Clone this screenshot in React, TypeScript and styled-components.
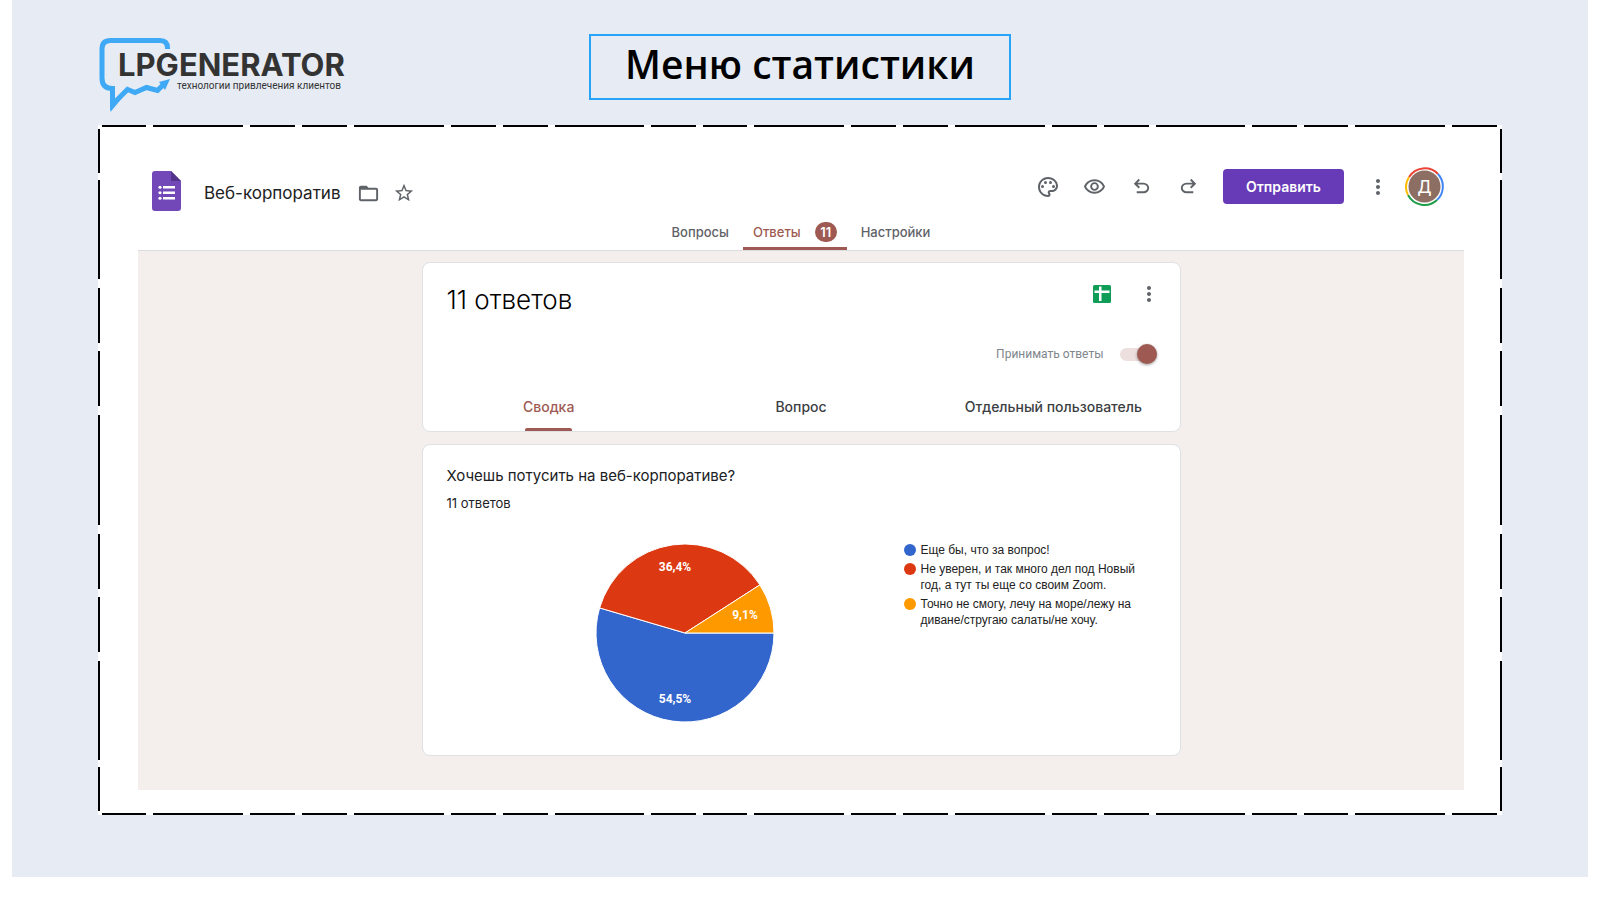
import React from "react";
import styled, { createGlobalStyle, css } from "styled-components";
import {
  MdFolderOpen,
  MdMoreVert,
  MdOutlinePalette,
  MdOutlineRemoveRedEye,
  MdStarBorder,
} from "react-icons/md";

const accent = "#9e5a52";
const ink = "#202124";
const muted = "#5f6368";

const GlobalStyle = createGlobalStyle`
  * { box-sizing: border-box; }
  body {
    margin: 0;
    background: #fff;
    color: ${ink};
    font-family: Inter, Roboto, sans-serif;
  }
  h1, h2, h3, p, ul { margin: 0; padding: 0; font-weight: 400; }
  button { border: 0; padding: 0; background: none; font: inherit; cursor: pointer; }
`;

const Slide = styled.div`
  margin: 0 12px 36px;
  padding: 0 86px 62px;
  background: #e6ebf4;
`;

const SlideHeader = styled.header`
  display: grid;
  grid-template-columns: 1fr auto 1fr;
  align-items: start;
  height: 125px;
  padding-top: 34px;
`;

const Logo = styled.div`
  position: relative;
  width: 256px;
  padding: 16px 0 0 20px;
`;

const LogoMark = styled.svg`
  position: absolute;
  left: 0;
  top: 2px;
`;

const LogoName = styled.p`
  position: relative;
  color: #333;
  font: 700 31px/30px Inter, sans-serif;
`;

const LogoTagline = styled.p`
  position: relative;
  padding-left: 59px;
  color: #333;
  font: 400 10px/12px Roboto, sans-serif;
  white-space: nowrap;
`;

const SlideTitle = styled.h1`
  display: flex;
  align-items: center;
  height: 66px;
  padding: 0 34px 6px;
  border: 2px solid #27a3fa;
  color: #000;
  font: 600 39px/48px "Open Sans", sans-serif;
`;

const Frame = styled.main`
  position: relative;
  padding: 0 38px 25px 40px;
  background: #fff;
`;

const FrameLines = styled.svg`
  position: absolute;
  inset: 0;
  width: 100%;
  height: 100%;
  pointer-events: none;
`;

const FormHeader = styled.header`
  border-bottom: 1px solid #dadce0;
`;

const TopRow = styled.div`
  display: flex;
  justify-content: space-between;
  align-items: flex-start;
  height: 89px;
  padding: 42px 20px 0 14px;
`;

const FormName = styled.div`
  display: flex;
  align-items: center;
  height: 44px;
  margin-top: 4px;
`;

const FormIcon = styled.svg`
  align-self: flex-start;
`;

const FormTitle = styled.h2`
  margin: 0 15px 0 23px;
  font-size: 17px;
  line-height: 24px;
`;

const Toolbar = styled.div`
  display: flex;
  align-items: center;
`;

const IconButton = styled.button<{ $width: number }>`
  display: flex;
  justify-content: center;
  align-items: center;
  width: ${(p) => p.$width}px;
  height: 36px;
  color: ${muted};
`;

const SendButton = styled.button`
  width: 121px;
  height: 35px;
  margin: 0 10px 0 11px;
  border-radius: 4px;
  background: #673ab7;
  color: #fff;
  font-size: 14px;
  font-weight: 600;
`;

const AvatarButton = styled.button`
  position: relative;
  display: grid;
  place-items: center;
  width: 39px;
  height: 39px;
  margin-left: 4px;
  color: #fff;
  font: 400 18px/20px Roboto, sans-serif;
`;

const AvatarRing = styled.svg`
  position: absolute;
  inset: 0;
`;

const AvatarLetter = styled.span`
  position: relative;
`;

const Tabs = styled.nav`
  display: flex;
  justify-content: center;
  gap: 14px;
`;

const Tab = styled.button<{ $active?: boolean }>`
  display: flex;
  align-items: center;
  gap: 14px;
  height: 36px;
  color: ${muted};
  font-size: 13px;
  font-weight: 500;
  ${(p) =>
    p.$active &&
    css`
      padding: 3px 10px 0;
      border-bottom: 3px solid ${accent};
      border-radius: 2px 2px 0 0;
      color: ${accent};
    `}
`;

const Badge = styled.span`
  width: 22px;
  border-radius: 10px;
  background: ${accent};
  color: #fff;
  font-weight: 600;
  line-height: 20px;
  text-align: center;
`;

const FormBody = styled.div`
  display: flex;
  flex-direction: column;
  align-items: center;
  gap: 12px;
  padding: 11px 0 34px;
  background: #f4efed;
`;

const Card = styled.section`
  width: 100%;
  max-width: 759px;
  border: 1px solid #dfe1e5;
  border-radius: 8px;
  background: #fff;
`;

const CardTop = styled.div`
  display: flex;
  justify-content: space-between;
  padding: 13px 7px 0 24px;
`;

const Count = styled.h2`
  color: #000;
  font-size: 26px;
  line-height: 48px;
  font-weight: 300;
`;

const CardActions = styled.div`
  display: flex;
`;

const AcceptRow = styled.label`
  display: flex;
  justify-content: flex-end;
  align-items: center;
  gap: 16px;
  height: 20px;
  margin-top: 20px;
  padding-right: 23px;
  color: #80868b;
  font: 400 12px/20px Roboto, sans-serif;
`;

const Switch = styled.input`
  appearance: none;
  display: flex;
  align-items: center;
  width: 37px;
  height: 20px;
  margin: 0;
  border-radius: 10px;

  &::before {
    content: "";
    position: relative;
    width: 20px;
    height: 20px;
    border-radius: 50%;
    background: #8f8f8f;
    box-shadow: 0 1px 3px rgba(0, 0, 0, 0.4);
  }
  &::after {
    content: "";
    order: -1;
    width: 37px;
    height: 13px;
    margin-right: -37px;
    border-radius: 7px;
    background: #ecdfdd;
  }
  &:checked::before {
    margin-left: auto;
    background: ${accent};
  }
`;

const ViewTabs = styled.div`
  display: grid;
  grid-template-columns: repeat(3, 1fr);
  justify-items: center;
  margin-top: 18px;
`;

const ViewTab = styled.button<{ $active?: boolean }>`
  position: relative;
  height: 49px;
  padding-bottom: 1px;
  color: ${(p) => (p.$active ? accent : "#3c4043")};
  font-size: 14px;
  font-weight: 500;

  &::after {
    content: "";
    position: absolute;
    inset: auto 2px 0;
    height: 3px;
    border-radius: 2px 2px 0 0;
    background: ${(p) => (p.$active ? accent : "transparent")};
  }
`;

const QuestionCard = styled(Card)`
  padding: 19px 24px 32px;
`;

const Question = styled.h3`
  font-size: 15px;
  line-height: 24px;
`;

const Answers = styled.p`
  margin-top: 5px;
  font-size: 13px;
  line-height: 20px;
`;

const ChartRow = styled.div`
  display: flex;
  margin-top: 29px;
`;

const Pie = styled.svg`
  flex: none;
  margin: 1px 0 0 148px;
`;

const PieLabel = styled.text`
  fill: #fff;
  font: 700 12px Roboto, sans-serif;
  text-anchor: middle;
`;

const Legend = styled.ul`
  display: grid;
  align-content: start;
  gap: 3px;
  width: 240px;
  margin-left: 129px;
  list-style: none;
  color: #222;
  font: 12px/16px "Liberation Sans", Arial, sans-serif;
`;

const LegendItem = styled.li<{ $color: string }>`
  display: flex;
  gap: 5px;

  &::before {
    content: "";
    flex: none;
    width: 12px;
    height: 12px;
    margin-top: 2px;
    border-radius: 50%;
    background: ${(p) => p.$color};
  }
`;

const slices = [
  { label: "54,5%", answer: "Еще бы, что за вопрос!", share: 6 / 11, color: "#3366cc", x: 80, y: 160 },
  { label: "36,4%", answer: "Не уверен, и так много дел под Новый год, а тут ты еще со своим Zoom.", share: 4 / 11, color: "#dc3912", x: 80, y: 28 },
  { label: "9,1%", answer: "Точно не смогу, лечу на море/лежу на диване/стругаю салаты/не хочу.", share: 1 / 11, color: "#ff9900", x: 150, y: 76 },
];

const radius = 89;
const centre = 90;

function slicePath(index: number) {
  const start = slices.slice(0, index).reduce((sum, s) => sum + s.share, 0) * Math.PI * 2;
  const end = start + slices[index].share * Math.PI * 2;
  const point = (a: number) => `${centre + radius * Math.cos(a)} ${centre + radius * Math.sin(a)}`;
  const large = end - start > Math.PI ? 1 : 0;
  return `M${centre} ${centre}L${point(start)}A${radius} ${radius} 0 ${large} 1 ${point(end)}Z`;
}

const horizontalDash = "44 7 90 7 45 7 45 7 90 7 45 7 45 7 89 7 45 7";
const verticalDash = "44 7 99 9 55 8 55 9 110 9 55 8 55 9 99 7 44 7";

const CurvedArrow = ({ flip }: { flip?: boolean }) => (
  <svg width="23" height="23" viewBox="0 0 24 24" fill="currentColor" aria-hidden="true">
    <path
      transform={flip ? "matrix(-1 0 0 1 24 0)" : undefined}
      d="M7 19v-2h7.1q1.575 0 2.738-1T18 13.5 16.838 11 14.1 10H7.8l2.6 2.6L9 14 4 9l5-5 1.4 1.4L7.8 8h6.3q2.425 0 4.163 1.575T20 13.5t-1.737 3.925T14.1 19z"
    />
  </svg>
);

export default function App() {
  return (
    <>
      <GlobalStyle />
      <Slide>
        <SlideHeader>
          <Logo>
            <LogoMark width="74" height="78" viewBox="0 0 74 78" fill="none" aria-hidden="true">
              <path
                d="M69.500 13V12Q69.500 4.500 62 4.500H12.500Q4 4.500 4 13V42Q4 52.500 14.500 52.500V68.500L29.500 53.500L37 56.500L48.500 51.500L59.500 54.500L66 48"
                stroke="#3fa9f5"
                strokeWidth="5"
              />
              <path d="M12 50.500H17V62L24 62L12.500 76Z" fill="#3fa9f5" />
              <path d="M61 46L72 43L67 54Z" fill="#3fa9f5" />
            </LogoMark>
            <LogoName>LPGENERATOR</LogoName>
            <LogoTagline>технологии привлечения клиентов</LogoTagline>
          </Logo>
          <SlideTitle>Меню статистики</SlideTitle>
        </SlideHeader>
        <Frame>
          <FormHeader>
            <TopRow>
              <FormName>
                <FormIcon width="29" height="40" viewBox="0 0 29 40" aria-hidden="true">
                  <path d="M3 0H19L29 10V37Q29 40 26 40H3Q0 40 0 37V3Q0 0 3 0Z" fill="#7248b9" />
                  <path d="M19 0L29 10H19Z" fill="#54338c" />
                  <g fill="#fff">
                    <path d="M11 15h12v2.500H11zM11 20.500h12V23H11zM11 26h12v2.500H11z" />
                    <circle cx="8" cy="16.250" r="1.600" />
                    <circle cx="8" cy="21.750" r="1.600" />
                    <circle cx="8" cy="27.250" r="1.600" />
                  </g>
                </FormIcon>
                <FormTitle>Веб-корпоратив</FormTitle>
                <IconButton $width={25} aria-label="Переместить в папку"><MdFolderOpen size={23} /></IconButton>
                <IconButton $width={47} aria-label="Пометить"><MdStarBorder size={22} /></IconButton>
              </FormName>
              <Toolbar>
                <IconButton $width={47} aria-label="Настроить тему"><MdOutlinePalette size={24} /></IconButton>
                <IconButton $width={47} aria-label="Предпросмотр"><MdOutlineRemoveRedEye size={23} /></IconButton>
                <IconButton $width={47} aria-label="Отменить"><CurvedArrow /></IconButton>
                <IconButton $width={47} aria-label="Повторить"><CurvedArrow flip /></IconButton>
                <SendButton>Отправить</SendButton>
                <IconButton $width={47} aria-label="Ещё"><MdMoreVert size={24} /></IconButton>
                <AvatarButton aria-label="Аккаунт">
                  <AvatarRing width="39" height="39" viewBox="0 0 39 39" fill="none" strokeWidth="2" aria-hidden="true">
                    <path d="M4 10A18.500 18.500 0 0 1 33 7" stroke="#ea4335" />
                    <path d="M33 7A18.500 18.500 0 0 1 32 33" stroke="#4285f4" />
                    <path d="M32 33A18.500 18.500 0 0 1 3 28" stroke="#1e9e4a" />
                    <path d="M3 28A18.500 18.500 0 0 1 4 10" stroke="#fbbc04" />
                    <circle cx="19.500" cy="19.500" r="16" fill="#8d6e63" />
                  </AvatarRing>
                  <AvatarLetter>Д</AvatarLetter>
                </AvatarButton>
              </Toolbar>
            </TopRow>
            <Tabs>
              <Tab>Вопросы</Tab>
              <Tab $active>
                Ответы <Badge>11</Badge>
              </Tab>
              <Tab>Настройки</Tab>
            </Tabs>
          </FormHeader>
          <FormBody>
            <Card>
              <CardTop>
                <Count>11 ответов</Count>
                <CardActions>
                  <IconButton $width={47} aria-label="Открыть таблицу">
                    <svg width="18" height="18" viewBox="0 0 18 18" aria-hidden="true">
                      <rect width="18" height="18" rx="1.500" fill="#0f9d58" />
                      <path d="M1.500 5.500H16.500V8H8.500V16H6V8H1.500ZM6 1.500H8.500V6H6Z" fill="#fff" />
                    </svg>
                  </IconButton>
                  <IconButton $width={47} aria-label="Другие действия"><MdMoreVert size={24} /></IconButton>
                </CardActions>
              </CardTop>
              <AcceptRow>
                Принимать ответы
                <Switch type="checkbox" role="switch" defaultChecked />
              </AcceptRow>
              <ViewTabs>
                <ViewTab $active>Сводка</ViewTab>
                <ViewTab>Вопрос</ViewTab>
                <ViewTab>Отдельный пользователь</ViewTab>
              </ViewTabs>
            </Card>
            <QuestionCard>
              <Question>Хочешь потусить на веб-корпоративе?</Question>
              <Answers>11 ответов</Answers>
              <ChartRow>
                <Pie width="180" height="180" viewBox="0 0 180 180" role="img" aria-label="Распределение ответов">
                  {slices.map((slice, i) => (
                    <path key={slice.label} d={slicePath(i)} fill={slice.color} stroke="#fff" strokeWidth="1" />
                  ))}
                  {slices.map((slice) => (
                    <PieLabel key={slice.label} x={slice.x} y={slice.y}>{slice.label}</PieLabel>
                  ))}
                </Pie>
                <Legend>
                  {slices.map((slice) => (
                    <LegendItem key={slice.label} $color={slice.color}>
                      {slice.answer}
                    </LegendItem>
                  ))}
                </Legend>
              </ChartRow>
            </QuestionCard>
          </FormBody>
          <FrameLines stroke="#000" strokeWidth="4" aria-hidden="true">
            <line x1="4" y1="0" x2="100%" y2="0" strokeDasharray={horizontalDash} />
            <line x1="4" y1="100%" x2="100%" y2="100%" strokeDasharray={horizontalDash} />
            <line x1="0" y1="4" x2="0" y2="100%" strokeDasharray={verticalDash} />
            <line x1="100%" y1="4" x2="100%" y2="100%" strokeDasharray={verticalDash} />
          </FrameLines>
        </Frame>
      </Slide>
    </>
  );
}
